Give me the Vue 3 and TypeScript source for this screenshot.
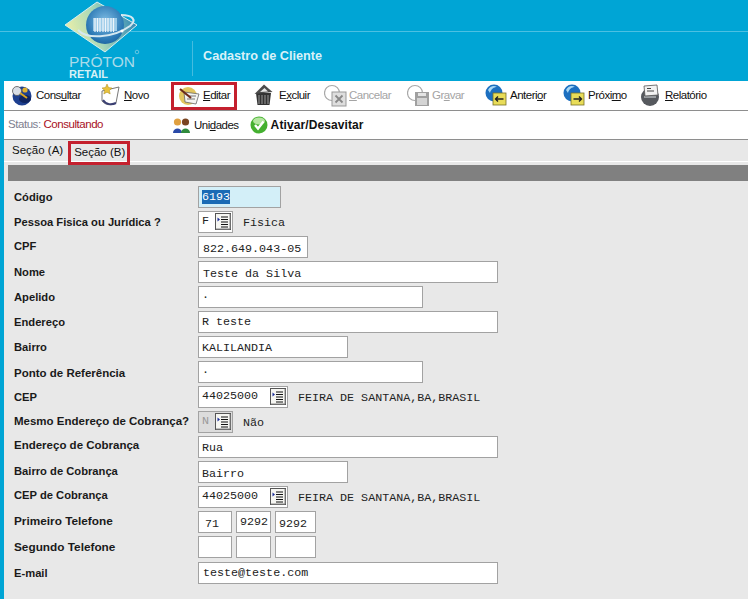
<template>
  <div class="page">
    <header class="head">
      <svg class="logo" width="110" height="82" viewBox="0 0 110 82">
        <defs>
          <linearGradient id="dia" x1="0" y1="0.6" x2="1" y2="0.4">
            <stop offset="0" stop-color="#eef0a8" />
            <stop offset="0.45" stop-color="#a8d8b8" />
            <stop offset="1" stop-color="#2f86b4" />
          </linearGradient>
          <radialGradient id="globe" cx="0.5" cy="0.4" r="0.7">
            <stop offset="0" stop-color="#7fbde4" />
            <stop offset="0.7" stop-color="#2a78b4" />
            <stop offset="1" stop-color="#175a96" />
          </radialGradient>
        </defs>
        <path d="M15 25 L47 2 L87 25 L55 52 Z" fill="url(#dia)" stroke="#d8eef2" stroke-width="1" />
        <circle cx="55" cy="25" r="19" fill="url(#globe)" />
        <path d="M43 18h24v13H43z" fill="#9ccbe8" />
        <path d="M45 18v14M47.500 18v14M50 18v14M53 18v14M55.500 18v14M58 18v14M61 18v14M63.500 18v14" stroke="#eef5fa" stroke-width="1.200" />
        <path d="M28 30c8 9 34 9 52-4 7-6 3-11-9-11" fill="none" stroke="#d4e8f0" stroke-width="2" />
        <circle cx="72" cy="31" r="1.500" fill="#fff" />
        <text x="19" y="67" class="logo-name">PRÓTON</text>
        <text x="19" y="78" class="logo-sub">RETAIL</text>
        <circle cx="87" cy="52" r="1.800" fill="none" stroke="#8fd2e6" stroke-width="0.700" />
      </svg>
      <div class="title">Cadastro de Cliente</div>
    </header>

    <nav class="toolbar">
      <div v-for="t in tools" :key="t.id" class="tool" :class="{ off: t.off, marked: t.id === 'editar' }">
        <svg class="ico" width="23" height="23" viewBox="0 0 23 23">
          <template v-if="t.id === 'consultar'">
            <circle cx="11" cy="12" r="9.500" fill="#1d3f8f" />
            <ellipse cx="14" cy="15" rx="6" ry="4" fill="#0f2460" />
            <circle cx="6" cy="7" r="4.500" fill="#d8dde6" stroke="#555" stroke-width="0.800" />
            <path d="M9 9l7 5" stroke="#d9a520" stroke-width="2" />
            <circle cx="14" cy="6" r="2.600" fill="#e0b030" />
          </template>
          <template v-else-if="t.id === 'novo'">
            <path d="M3 7 L20 3 L17 19 C12 22 6 21 3 17 Z" fill="#fff" stroke="#777" stroke-width="1" />
            <path d="M4 16c3 5 9 5 13 3" fill="none" stroke="#3a3f72" stroke-width="2" />
            <path d="M8 0l1.500 3.500L13 4l-2.600 2.400.8 3.600L8 8.200 4.800 10l.8-3.600L3 4l3.500-.5z" fill="#e8c23c" stroke="#a88b20" stroke-width="0.500" />
          </template>
          <template v-else-if="t.id === 'editar'">
            <circle cx="10" cy="12" r="9" fill="#e3c65e" />
            <path d="M6 8 L21 10 L18 20 L7 18 Z" fill="#f4f4f0" stroke="#666" stroke-width="0.800" />
            <path d="M10 12h8M9 15h8" stroke="#777" stroke-width="1" />
            <path d="M2 5l11 9" stroke="#6b2c1a" stroke-width="2.200" />
          </template>
          <template v-else-if="t.id === 'excluir'">
            <path d="M2 9 L17 9 L15.500 21 L3.500 21 Z" fill="#333" />
            <path d="M5 11v9M8 11v9M11 11v9M14 11v9" stroke="#9a9a9a" stroke-width="1" />
            <path d="M0.500 10 L10 0.500 L18.500 8 Z" fill="#4c4c4c" />
            <path d="M6 8 L10.500 4 L14 7.500 Z" fill="#e8e8e8" />
          </template>
          <template v-else-if="t.id === 'cancelar'">
            <circle cx="8" cy="9" r="7.500" fill="#fff" stroke="#a8a8a8" stroke-width="1.200" />
            <rect x="8" y="8" width="14" height="14" fill="#dedede" stroke="#999" />
            <path d="M11.500 11.500l7 7M18.500 11.500l-7 7" stroke="#888" stroke-width="1.800" />
          </template>
          <template v-else-if="t.id === 'gravar'">
            <circle cx="8" cy="9" r="7.500" fill="#fff" stroke="#a8a8a8" stroke-width="1.200" />
            <rect x="8" y="8" width="14" height="14" fill="#a0a0a0" />
            <rect x="11" y="9" width="8" height="3" fill="#e4e4e4" />
            <rect x="10" y="14" width="10" height="7" fill="#d4d4d4" />
          </template>
          <template v-else-if="t.id === 'anterior' || t.id === 'proximo'">
            <circle cx="9" cy="9" r="8.500" fill="#1c6fc0" />
            <path d="M3 6c2-4 6-5 9-3-3 0-6 2-7 6z" fill="#a8d8f4" />
            <rect x="8" y="9" width="13" height="12" fill="#e8dc58" stroke="#77702a" stroke-width="0.800" />
            <path v-if="t.id === 'anterior'" d="M18.500 15h-8M13 12.500L10.500 15l2.500 2.500" fill="none" stroke="#222" stroke-width="1.400" />
            <path v-else d="M10.500 15h8M16 12.500l2.500 2.500-2.500 2.500" fill="none" stroke="#222" stroke-width="1.400" />
          </template>
          <template v-else>
            <circle cx="10" cy="13" r="9" fill="#56595e" />
            <path d="M4 13h12" stroke="#b0b4b8" stroke-width="1.500" />
            <path d="M4 2 L17 1 L18 11 L5 12 Z" fill="#f2f2f2" stroke="#555" stroke-width="0.800" />
            <path d="M7 4.500h4M7 7h7" stroke="#444" stroke-width="1" />
          </template>
        </svg>
        <span class="lbl">{{ t.pre }}<u>{{ t.key }}</u>{{ t.post }}</span>
      </div>
    </nav>

    <div class="statusbar">
      <div class="status"><span class="st-k">Status:</span> <span class="st-v">Consultando</span></div>
      <div class="act">
        <svg width="19" height="17" viewBox="0 0 19 17">
          <circle cx="5.500" cy="5" r="3.600" fill="#e0a040" />
          <path d="M1 16c0-6 9-6 9 0z" fill="#2a4aa8" />
          <circle cx="13.500" cy="5" r="3.600" fill="#7a4420" />
          <path d="M9 16c0-6 9-6 9 0z" fill="#2f8a3c" />
        </svg>
        <span class="lbl">Uni<u>d</u>ades</span>
      </div>
      <div class="act act-on">
        <svg width="18" height="18" viewBox="0 0 18 18">
          <circle cx="9" cy="9" r="8.500" fill="#45b030" />
          <ellipse cx="9" cy="5" rx="6" ry="3.500" fill="#b4e6a0" />
          <path d="M5 9l3 3.500 5.500-7" fill="none" stroke="#fff" stroke-width="2.400" />
        </svg>
        <b class="strong">Ati<u>v</u>ar/Desavitar</b>
      </div>
    </div>

    <div class="tabs">
      <span class="tab">Seção (A)</span>
      <span class="tab tab-b">Seção (B)</span>
    </div>

    <main class="body">
      <div class="bar"></div>
      <form class="form" @submit.prevent>
        <div v-for="r in rows" :key="r.label" class="row">
          <label class="name" :style="{ fontSize: (r.fs ?? 11.2) + 'px', paddingTop: (r.ly ?? 5) + 'px' }">{{ r.label }}</label>
          <div class="fields">
            <div
              v-for="(f, i) in r.fields"
              :key="i"
              class="box"
              :class="{ sel: f.sel, dis: f.dis }"
              :style="{ width: f.w + 'px', paddingLeft: (f.dx ?? 3) + 'px', paddingTop: (f.dy ?? 3) + 'px' }"
            >
              <span class="val" :class="{ picked: f.sel }">{{ f.v }}</span>
              <button v-if="f.look" class="look" type="button">
                <svg width="16" height="17" viewBox="0 0 16 17">
                  <rect x="0.500" y="0.500" width="15" height="16" fill="#f6f6f2" stroke="#555" />
                  <path d="M15 1v15H1" fill="none" stroke="#888" />
                  <path d="M6 4h7M6 6.500h7M6 9h7M6 11.500h7M6 14h7" stroke="#111" stroke-width="1" />
                  <path d="M2.500 4.500l2.500 2-2.500 2z" fill="#1c2f9a" />
                </svg>
              </button>
            </div>
            <span v-if="r.note" class="note">{{ r.note }}</span>
          </div>
        </div>
      </form>
    </main>
  </div>
</template>

<script setup lang="ts">
interface Tool {
  id: string;
  pre: string;
  key: string;
  post: string;
  off?: boolean;
}

interface Field {
  v: string;
  w: number;
  dx?: number;
  dy?: number;
  look?: boolean;
  sel?: boolean;
  dis?: boolean;
}

interface Row {
  label: string;
  fields: Field[];
  note?: string;
  fs?: number;
  ly?: number;
}

const tools: Tool[] = [
  { id: 'consultar', pre: 'Cons', key: 'u', post: 'ltar' },
  { id: 'novo', pre: '', key: 'N', post: 'ovo' },
  { id: 'editar', pre: '', key: 'E', post: 'ditar' },
  { id: 'excluir', pre: 'E', key: 'x', post: 'cluir' },
  { id: 'cancelar', pre: '', key: 'C', post: 'ancelar', off: true },
  { id: 'gravar', pre: 'Gr', key: 'a', post: 'var', off: true },
  { id: 'anterior', pre: 'Anteri', key: 'o', post: 'r' },
  { id: 'proximo', pre: 'Próxi', key: 'm', post: 'o' },
  { id: 'relatorio', pre: '', key: 'R', post: 'elatório' }
];

const cidade = 'FEIRA DE SANTANA,BA,BRASIL';

const rows: Row[] = [
  { label: 'Código', fields: [{ v: '6193', w: 83, sel: true }] },
  { label: 'Pessoa Fisica ou Jurídica ?', fields: [{ v: 'F', w: 35, look: true, dy: 2 }], note: 'Física' },
  { label: 'CPF', ly: 4, fields: [{ v: '822.649.043-05', w: 110, dx: 4, dy: 5 }] },
  { label: 'Nome', fields: [{ v: 'Teste da Silva', w: 300, dx: 4, dy: 5 }] },
  { label: 'Apelido', fields: [{ v: '.', w: 225, dx: 3, dy: 1 }] },
  { label: 'Endereço', fields: [{ v: 'R teste', w: 300 }] },
  { label: 'Bairro', fields: [{ v: 'KALILANDIA', w: 150, dy: 4 }] },
  { label: 'Ponto de Referência', fs: 11.5, ly: 6, fields: [{ v: '.', w: 225, dx: 3, dy: 1 }] },
  { label: 'CEP', fields: [{ v: '44025000', w: 90, look: true, dy: 2 }], note: cidade },
  { label: 'Mesmo Endereço de Cobrança?', fs: 11.5, ly: 4, fields: [{ v: 'N', w: 35, look: true, dis: true, dy: 2 }], note: 'Não' },
  { label: 'Endereço de Cobrança', fs: 11.5, ly: 3, fields: [{ v: 'Rua', w: 300, dy: 4 }] },
  { label: 'Bairro de Cobrança', ly: 4, fields: [{ v: 'Bairro', w: 150, dy: 5 }] },
  { label: 'CEP de Cobrança', ly: 3, fields: [{ v: '44025000', w: 90, look: true, dy: 2 }], note: cidade },
  {
    label: 'Primeiro Telefone',
    fs: 11.8,
    ly: 3,
    fields: [
      { v: '71', w: 34, dx: 6, dy: 5 },
      { v: '9292', w: 35, dy: 3 },
      { v: '9292', w: 41, dy: 5 }
    ]
  },
  { label: 'Segundo Telefone', fs: 11.8, ly: 4, fields: [{ v: '', w: 34 }, { v: '', w: 35 }, { v: '', w: 41 }] },
  { label: 'E-mail', fields: [{ v: 'teste@teste.com', w: 300, dx: 4 }] }
];
</script>

<style scoped>
.page {
  width: 748px;
  height: 599px;
  overflow: hidden;
  display: flex;
  flex-direction: column;
  background: #00a5d5;
  font-family: "Liberation Sans", Arial, sans-serif;
  color: #111;
}

.head {
  height: 81px;
  flex: none;
  display: flex;
  background: linear-gradient(#00a5d5 31px, #4cc0e2 31px, #4cc0e2 32px, #00a5d5 32px);
}

.logo {
  margin-left: 50px;
  flex: none;
}

.logo-name {
  font-family: "Liberation Sans", Arial, sans-serif;
  font-size: 15.500px;
  fill: #a9dbea;
}

.logo-sub {
  font-family: "Liberation Sans", Arial, sans-serif;
  font-size: 11px;
  font-weight: 700;
  fill: #d6f0f6;
}

.title {
  margin: 41px 0 5px 32px;
  padding: 8px 0 0 10px;
  box-sizing: border-box;
  height: 35px;
  border-left: 1px solid #45bcdf;
  font-size: 12.700px;
  font-weight: 700;
  color: #d8f1f8;
}

.toolbar {
  height: 30px;
  flex: none;
  margin-left: 4px;
  padding-left: 7px;
  display: grid;
  grid-template-columns: 88px 79px 76px 70px 83px 78px 78px 77px 1fr;
  align-items: center;
  box-sizing: border-box;
  background: #fff;
  border-bottom: 1px solid #8e8e8e;
}

.tool {
  position: relative;
  display: flex;
  align-items: center;
  gap: 2px;
  font-size: 11.500px;
  letter-spacing: -0.500px;
  color: #111;
}

.tool .lbl {
  margin-bottom: 2px;
}

.tool.off {
  color: #a4a4a4;
}

.tool.marked::after {
  content: "";
  position: absolute;
  left: -7px;
  top: -2px;
  width: 60px;
  height: 22px;
  border: 3px solid #c4202e;
}

.lbl {
  white-space: nowrap;
}

.statusbar {
  height: 29px;
  flex: none;
  margin-left: 4px;
  padding-left: 4px;
  display: flex;
  align-items: center;
  box-sizing: border-box;
  background: #fff;
  border-bottom: 1px solid #8e8e8e;
  font-size: 11.500px;
}

.status {
  width: 164px;
  flex: none;
  letter-spacing: -0.450px;
  margin-top: -2px;
}

.st-k {
  color: #808090;
}

.st-v {
  color: #a8101e;
}

.act {
  display: flex;
  align-items: center;
  gap: 3px;
  margin-right: 11px;
  letter-spacing: -0.500px;
}

.strong {
  font-size: 12px;
  font-weight: 700;
  letter-spacing: 0.100px;
}

.tabs {
  height: 22px;
  flex: none;
  margin-left: 4px;
  padding-left: 8px;
  display: flex;
  box-sizing: border-box;
  background: #e8e8e8;
  border-bottom: 1px solid #fff;
  font-size: 11.500px;
}

.tab {
  position: relative;
  margin-top: 4px;
  margin-right: 11px;
}

.tab-b {
  margin-top: 6px;
}

.tab-b::after {
  content: "";
  position: absolute;
  left: -6px;
  top: -5px;
  width: 56px;
  height: 18px;
  border: 3px solid #c4202e;
}

.body {
  flex: 1;
  margin-left: 4px;
  padding: 3px 0 0 4px;
  background: #e8e8e8;
}

.bar {
  height: 16px;
  background: #808080;
}

.form {
  padding: 5px 0 0 6px;
  display: flex;
  flex-direction: column;
}

.row {
  height: 25px;
  display: flex;
}

.row:last-child {
  margin-top: 1px;
}

.name {
  width: 184px;
  flex: none;
  font-weight: 700;
  color: #1a1a1a;
  white-space: nowrap;
}

.fields {
  display: flex;
  gap: 4px;
  align-items: flex-start;
}

.box {
  position: relative;
  height: 22px;
  box-sizing: border-box;
  border: 1px solid #a2a2a2;
  background: #fff;
  font-family: "Liberation Mono", "Courier New", monospace;
  font-size: 11.700px;
  line-height: 14px;
  color: #222;
}

.box.sel {
  background: #d3eff8;
}

.box.dis {
  background: #dcdcdc;
  color: #999;
}

.picked {
  background: #1a6bb5;
  color: #fff;
}

.look {
  position: absolute;
  right: 1px;
  top: 1px;
  width: 16px;
  height: 17px;
  padding: 0;
  border: 0;
  background: none;
}

.note {
  margin: 5px 0 0 6px;
  font-family: "Liberation Mono", "Courier New", monospace;
  font-size: 11.700px;
  line-height: 14px;
  color: #222;
  white-space: nowrap;
}
</style>
